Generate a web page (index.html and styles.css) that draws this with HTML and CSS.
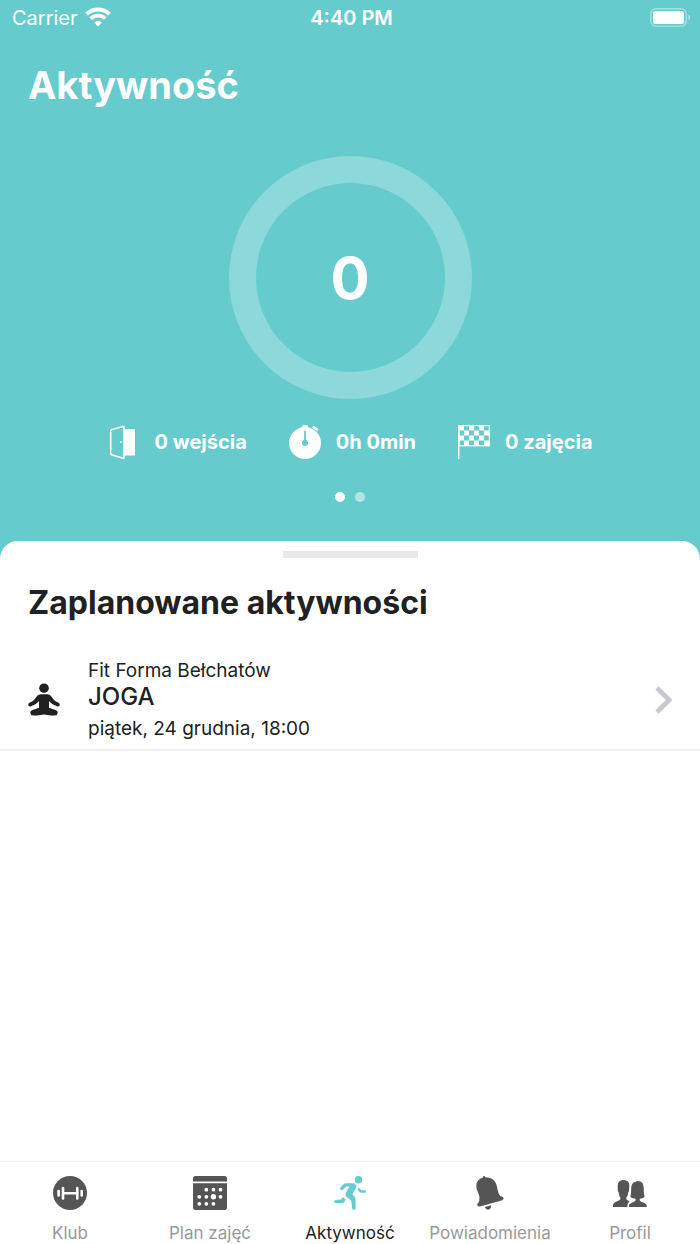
FILE: index.html
```html
<!DOCTYPE html>
<html lang="pl">
<head>
<meta charset="utf-8">
<meta name="viewport" content="width=device-width, initial-scale=1">
<title>Aktywność</title>
<link rel="stylesheet" href="styles.css">
</head>
<body>
<header class="hero">
  <div class="status">
    <div class="status-carrier">
      <span>Carrier</span>
      <svg class="wifi" viewBox="0 1 26 19" aria-hidden="true">
        <g fill="none" stroke="#fff" stroke-width="3.8">
          <path d="M1.6 7.2A16.2 16.2 0 0 1 24.4 7.2"/>
          <path d="M5.8 11.6A10.2 10.2 0 0 1 20.2 11.6"/>
        </g>
        <path fill="#fff" d="M13 19.500l-4-4a5.700 5.700 0 0 1 8 0z"/>
      </svg>
    </div>
    <span class="status-time">4:40 PM</span>
    <svg class="battery" viewBox="0 0 41 19" aria-hidden="true">
      <rect x="0.8" y="0.8" width="35.4" height="17.4" rx="5" fill="none" stroke="#fff" stroke-opacity=".4" stroke-width="1.6"/>
      <rect x="3" y="3" width="31" height="13" rx="2.5" fill="#fff"/>
      <path d="M38.4 6.5a3.4 3.4 0 0 1 0 6z" fill="#fff" fill-opacity=".5"/>
    </svg>
  </div>
  <h1 class="title">Aktywność</h1>
  <div class="ring"><span>0</span></div>
  <ul class="stats">
    <li class="stat">
      <svg class="stat-icon" viewBox="0 0 32 36" aria-hidden="true">
        <path d="M16.8 5H28v26.500H16.800z" fill="#fff"/>
        <path d="M4.500 5.800Q3.700 6 3.700 6.800V29.600Q3.700 30.400 4.500 30.700L16 34.200Q17 34.400 17 33.400V3.300Q17 2.200 16 2.500z" fill="#66cbcd" stroke="#fff" stroke-width="1.600"/>
        <circle cx="13.800" cy="18" r="1" fill="#fff"/>
      </svg>
      <span>0 wejścia</span>
    </li>
    <li class="stat">
      <svg class="stat-icon" viewBox="0 0 32 36" aria-hidden="true">
        <circle cx="16" cy="19" r="16" fill="#fff"/>
        <rect x="13" y="1" width="6" height="4" rx="1.500" fill="#fff"/>
        <path d="M24.500 3L28 5.500" stroke="#fff" stroke-width="2.400" stroke-linecap="round"/>
        <path d="M16 7.500V19" stroke="#66cbcd" stroke-width="1.800" stroke-linecap="round"/>
        <circle cx="16" cy="19" r="3" fill="#66cbcd"/>
      </svg>
      <span>0h 0min</span>
    </li>
    <li class="stat">
      <svg class="stat-icon" viewBox="0 0 32 36" aria-hidden="true">
        <path d="M.7 1V35" stroke="#fff" stroke-width="1.400"/>
        <rect x="1" y="1.600" width="30.300" height="20.200" fill="none" stroke="#fff" stroke-width="1.200"/>
        <path fill="#fff" d="M1 2h5v4.500H1zM11 2h5v4.500h-5zM21 2h5v4.500h-5zM6 6.500h5v5H6zM16 6.500h5v5h-5zM26 6.500h5v5h-5zM1 11.500h5v5H1zM11 11.500h5v5h-5zM21 11.500h5v5h-5zM6 16.500h5v5H6zM16 16.500h5v5h-5zM26 16.500h5v5h-5z"/>
      </svg>
      <span>0 zajęcia</span>
    </li>
  </ul>
  <div class="dots">
    <button class="dot dot-active" type="button" aria-label="Strona 1"></button>
    <button class="dot" type="button" aria-label="Strona 2"></button>
  </div>
</header>

<main class="sheet">
  <div class="handle"></div>
  <h2 class="subtitle">Zaplanowane aktywności</h2>
  <a class="activity" href="#joga">
    <svg class="activity-icon" viewBox="0 0 32 34" aria-hidden="true">
      <circle cx="16" cy="5.200" r="4.800" fill="#212121"/>
      <path fill="#212121" d="M13 11.200H19.500Q21.500 11.200 22.800 12.800L26 17Q27 18.200 28.500 18.800L30.600 19.800Q32.300 20.800 31.500 22.500Q30.700 24 28.900 23.300L25 21.500Q23.500 20.800 22.500 19.600L21 18V24.800L28.200 27.300Q29.800 28 29.700 30Q29.300 32.600 26.800 32.600H23L16 31.600L9 32.600H5.200Q2.700 32.600 2.300 30Q2.200 28 3.800 27.300L11 24.800V18L9.500 19.600Q8.500 20.800 7 21.500L3.100 23.300Q1.300 24 .5 22.500Q-.3 20.800 1.400 19.800L3.500 18.800Q5 18.200 6 17L9.200 12.800Q10.500 11.200 13 11.200z"/>
    </svg>
    <span class="activity-text">
      <span class="activity-line">Fit Forma Bełchatów</span>
      <span class="activity-name">JOGA</span>
      <span class="activity-line">piątek, 24 grudnia, 18:00</span>
    </span>
    <svg class="chevron" viewBox="0 0 17 28" aria-hidden="true">
      <path d="M2 2l12.200 12L2 26" fill="none" stroke="#c7c7cc" stroke-width="4.800"/>
    </svg>
  </a>
</main>

<nav class="tabs">
  <a class="tab" href="#klub">
    <svg class="tab-icon" viewBox="0 0 34 34" aria-hidden="true">
      <circle cx="17" cy="17" r="17" fill="#555"/>
      <g stroke="#fff" stroke-width="2.600" stroke-linecap="round" fill="none">
        <path d="M10 12v10.500M24.300 12v10.500M5.600 15v4.400M28.700 15v4.400"/>
        <path d="M11 17.200h12.500"/>
      </g>
    </svg>
    <span>Klub</span>
  </a>
  <a class="tab" href="#plan">
    <svg class="tab-icon" viewBox="0 0 34 34" aria-hidden="true">
      <path fill="#555" d="M2.500 0h29Q34 0 34 2.500V5.500H0V2.500Q0 0 2.500 0zM0 7.200H34V31.500Q34 34 31.500 34H2.500Q0 34 0 31.500z"/>
      <g fill="#fff">
        <circle cx="13.300" cy="13.700" r="1.900"/><circle cx="20.400" cy="13.700" r="1.900"/><circle cx="27.500" cy="13.700" r="1.900"/>
        <circle cx="6.300" cy="20.800" r="1.900"/><circle cx="13.300" cy="20.800" r="1.900"/><circle cx="20.400" cy="20.800" r="2.700"/><circle cx="27.500" cy="20.800" r="1.900"/>
        <circle cx="6.300" cy="27.800" r="1.900"/><circle cx="13.300" cy="27.800" r="1.900"/><circle cx="20.400" cy="27.800" r="1.900"/>
      </g>
    </svg>
    <span>Plan zajęć</span>
  </a>
  <a class="tab tab-active" href="#aktywnosc" aria-current="page">
    <svg class="tab-icon" viewBox="0 0 34 34" aria-hidden="true">
      <circle cx="25.500" cy="3.700" r="3.700" fill="#66cbcd"/>
      <path fill="#66cbcd" d="M12.500 7.200H20Q21.800 7.300 23 9Q24 10.500 23 12L19.300 18.200L21.600 20.500Q22.300 21.300 22.400 22.500L22.600 32Q22.500 34 20.900 34Q19.200 34 19 32.200L18.300 24.700L13.500 20.800Q11.600 18.900 12.800 16.800L16.300 10.500H13.500L10.200 13.500Q8.700 14.700 7.500 13.700Q6.500 12.500 7.600 11.200L10.800 8Q11.500 7.200 12.500 7.200z"/>
      <path d="M25.800 13.500L28.200 15.500H31.800" fill="none" stroke="#66cbcd" stroke-width="2.600" stroke-linecap="round" stroke-linejoin="round"/>
      <path fill="#66cbcd" d="M9.700 21.200L12.800 23.500L11.200 26Q10.600 27 9.300 27H2.700Q1 26.800 1 25.300Q1.200 24 2.700 23.900L8 23.500z"/>
    </svg>
    <span>Aktywność</span>
  </a>
  <a class="tab" href="#powiadomienia">
    <svg class="tab-icon" viewBox="0 0 34 34" aria-hidden="true">
      <path fill="#555" d="M10 1.500Q9.600.2 10.700 0Q11.700-.2 12.300 1.200Q20 1 23 7.500Q24 10 24.700 14Q25.500 18.500 27.500 20.200L29 20.600Q31.200 21.500 30.300 23.300Q29.800 24.200 28.500 24.600L7 30.500Q4.400 31 4.200 28.600Q4.200 27.500 5.500 26.500Q6.800 25 6.300 20L3.700 13Q2.500 7 5.500 4Q7.500 2 10 1.500z"/>
      <path fill="#555" d="M11.800 31L18 29.300Q18.500 32.500 16 33.500Q13.200 34.300 11.800 31z"/>
    </svg>
    <span>Powiadomienia</span>
  </a>
  <a class="tab" href="#profil">
    <svg class="tab-icon" viewBox="0 0 34 34" aria-hidden="true">
      <path fill="#555" d="M0 31V29.300Q0 27 2.500 26L6.300 24.300Q7.800 23.600 7.500 22Q6 20 5.700 16.500Q4.300 15 4.800 13.200Q4 7 6.800 5Q10 3 13.800 4.800Q17.200 6 16 13.200Q16.500 15 15.200 16.500Q14.800 20 13.200 22Q13 23.600 14.500 24.300L16.500 25.200Q14.300 27 14.300 31z"/>
      <path fill="#555" d="M15.700 31Q15.700 28 18.200 27L21.500 25.500Q23 24.700 22.600 22.700Q19.500 22.500 17.400 21Q18.300 18 18.200 12Q18.500 6.500 22.500 6Q24 4.600 26.500 5.200Q30.500 6 30.700 12Q30.700 18 31.600 21Q29.500 22.500 26.700 22.700Q26.300 24.700 27.800 25.500L31.500 27Q34 28 34 31z"/>
    </svg>
    <span>Profil</span>
  </a>
</nav>
</body>
</html>
```
FILE: styles.css
```css
* {
  box-sizing: border-box;
}

body {
  margin: 0;
  min-height: 100vh;
  display: flex;
  flex-direction: column;
  background: #66cbcd;
  color: #212121;
  font-family: Inter, "Noto Sans", sans-serif;
}

a {
  color: inherit;
  text-decoration: none;
}

.hero {
  color: #fff;
  padding-bottom: 39px;
}

.status {
  display: grid;
  grid-template-columns: 1fr auto 1fr;
  align-items: center;
  height: 35px;
  padding: 0 9px 0 12px;
  font-size: 20px;
}

.status-carrier {
  display: flex;
  align-items: center;
  gap: 7px;
}

.status-time {
  font-weight: 600;
}

.wifi {
  width: 26px;
  height: 19px;
  overflow: visible;
}

.battery {
  width: 41px;
  height: 19px;
  justify-self: end;
}

.title {
  margin: 26px 28px 0;
  font-size: 38px;
  line-height: 48px;
  font-weight: 700;
}

.ring {
  display: flex;
  align-items: center;
  justify-content: center;
  width: 243px;
  height: 243px;
  margin: 47px auto 0;
  border: 27px solid rgba(255, 255, 255, 0.26);
  border-radius: 50%;
  font-size: 58px;
  font-weight: 700;
}

.stats {
  display: flex;
  justify-content: center;
  gap: 42px;
  margin: 25px 0 0;
  padding: 0;
  list-style: none;
  font-size: 20px;
  font-weight: 700;
}

.stat {
  display: flex;
  align-items: center;
  gap: 15px;
}

.stat-icon {
  width: 32px;
  height: 36px;
}

.dots {
  display: flex;
  justify-content: center;
  gap: 10px;
  margin-top: 32px;
}

.dot {
  width: 10px;
  height: 10px;
  padding: 0;
  border: 0;
  border-radius: 50%;
  background: rgba(255, 255, 255, 0.5);
}

.dot-active {
  background: #fff;
}

.sheet {
  flex: 1;
  padding-top: 10px;
  background: #fff;
  border-radius: 18px 18px 0 0;
}

.handle {
  width: 135px;
  height: 7px;
  margin: 0 auto;
  background: #e8e8e8;
}

.subtitle {
  margin: 25px 28px 0;
  font-size: 32px;
  line-height: 40px;
  font-weight: 700;
}

.activity {
  display: flex;
  align-items: center;
  margin-top: 36px;
  padding: 0 28px 8px;
  border-bottom: 2px solid #efefef;
}

.activity-icon {
  width: 32px;
  height: 34px;
}

.activity-text {
  display: flex;
  flex-direction: column;
  flex: 1;
  margin-left: 28px;
}

.activity-line {
  font-size: 19px;
  line-height: 24px;
}

.activity-name {
  margin-bottom: 6px;
  font-size: 24px;
  line-height: 28px;
  font-weight: 500;
}

.chevron {
  width: 17px;
  height: 28px;
}

.tabs {
  display: grid;
  grid-template-columns: repeat(5, 1fr);
  padding: 14px 0 1px;
  background: #fff;
  border-top: 1px solid #f0f0f0;
}

.tab {
  display: flex;
  flex-direction: column;
  align-items: center;
  gap: 13px;
  color: #999;
  font-size: 17px;
  line-height: 20px;
}

.tab-active {
  color: #212121;
}

.tab-icon {
  width: 34px;
  height: 34px;
}
```
